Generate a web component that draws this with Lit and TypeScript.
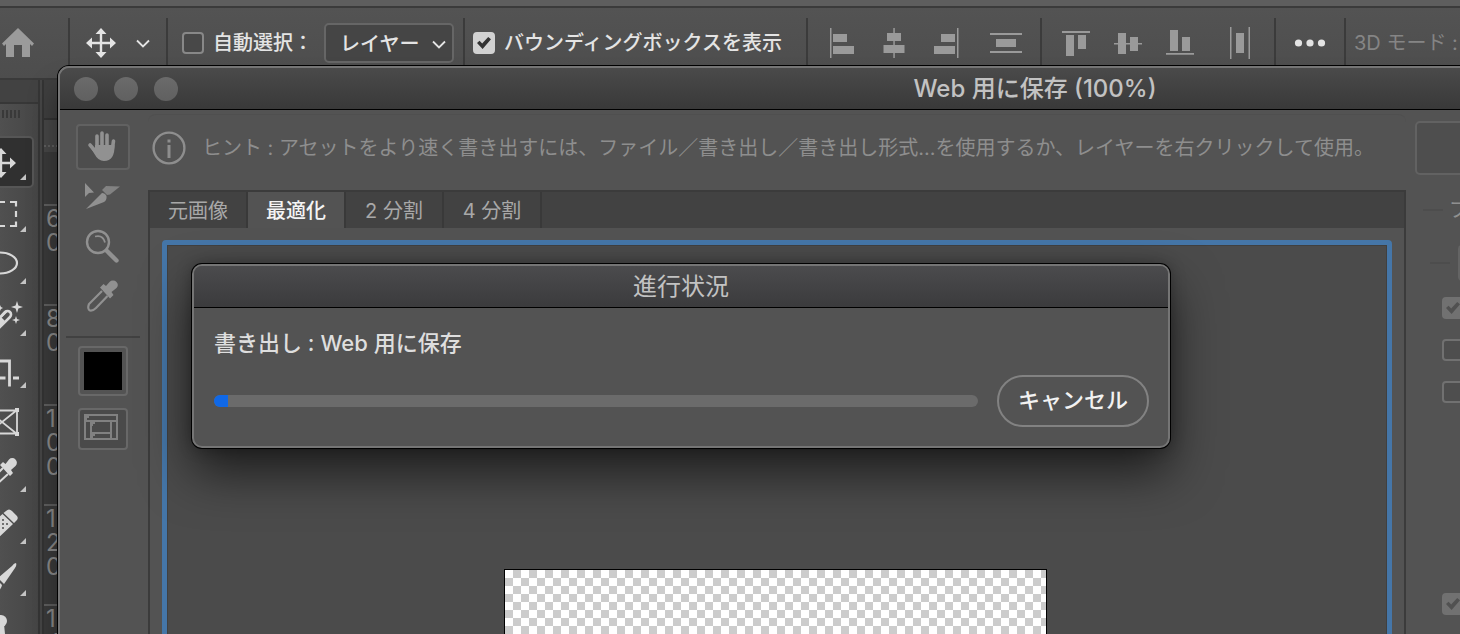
import { LitElement, html, svg, css } from "lit";
import { customElement } from "lit/decorators.js";

const moveGlyph = svg`
  <path d="M0 -15L5.5 -9H1.2V-1.2H9V-5.5L15 0L9 5.5V1.2H1.2V9H5.5L0 15L-5.5 9H-1.2V1.2H-9V5.5L-15 0L-9 -5.5V-1.2H-1.2V-9H-5.5Z"/>`;

const chevron = html`<svg class="chevron" viewBox="0 0 14 10" width="14" height="10" aria-hidden="true">
  <path d="M1 2.5L7 8.500L13 2.5" fill="none" stroke="currentColor" stroke-width="1.8"/></svg>`;

const alignGroups = [
  [
    { name: "左端揃え", d: "M-12 -15h1.5v30h-1.5zM-9 -9h14v8h-14zM-9 3h21v8h-21z" },
    { name: "水平方向中央揃え", d: "M-.7 -15h1.5v30h-1.5zM-7 -10h14v8h-14zM-10.5 2h21v8h-21z" },
    { name: "右端揃え", d: "M11 -15h1.5v30h-1.5zM-5 -9h14v8h-14zM-12 3h21v8h-21z" },
    { name: "垂直方向に分布", d: "M-16 -10h32v2h-32zM-10 -4h20v8h-20zM-16 8h32v2h-32z" },
  ],
  [
    { name: "上端揃え", d: "M-14 -12h28v2h-28zM-10 -8h8v21h-8zM2 -8h8v14h-8z" },
    { name: "垂直方向中央揃え", d: "M-14 0h28v1.6h-28zM-10 -10h8v21h-8zM2 -6h8v14h-8z" },
    { name: "下端揃え", d: "M-14 10h28v1.8h-28zM-10 -13h8v21h-8zM2 -6h8v14h-8z" },
    { name: "水平方向に分布", d: "M-10 -16h1.5v32h-1.5zM-4 -10h8v20h-8zM8.5 -16h1.5v32h-1.5z" },
  ],
];

const mainTools = [
  { name: "移動", active: true, more: true, art: svg`<g transform="translate(1 1)">${moveGlyph}</g>` },
  { name: "長方形選択", more: true, art: svg`<path d="M-1 -12H5M10 -12H16V-7.500M16 -3V3M16 7.500V12H10M5 12H-1M-6 12H-12M-6 -12H-12" fill="none" stroke="currentColor" stroke-width="2.2"/>` },
  { name: "なげなわ", more: true, art: svg`<ellipse cx="0" cy="-3" rx="17" ry="10.5" fill="none" stroke="currentColor" stroke-width="2.2"/>` },
  { name: "自動選択ツール", more: true, art: svg`
      <path d="M17 -17l1.4 4.600L23 -11l-4.600 1.400L17 -5l-1.400 -4.600L11 -11l4.600 -1.400zM16 -2l1 3L20 2l-3 1L16 6l-1 -3L12 2l3 -1zM0 -13l1 2L3 -10l-2 1L0 -7l-1 -2L-3 -10l2 -1z"/>
      <path d="M-9 9L5 -6a3.4 3.4 0 0 1 5 5L-4 13" fill="none" stroke="currentColor" stroke-width="2.6"/>
      <path d="M-10 9L0 -2l5 5L-5 14z"/><path d="M1 -1L7 -7" stroke="currentColor" stroke-width="2"/>` },
  { name: "切り抜き", more: true, art: svg`<path d="M-16 -9H9.5V16.500M-16 8H5.500M13 8H19" fill="none" stroke="currentColor" stroke-width="2.8"/>` },
  { name: "フレーム", more: false, art: svg`
      <path d="M-14 -11.500H17V11.500H-14zM-13 -12L17 12M-13 12L17 -12" fill="none" stroke="currentColor" stroke-width="1.8"/>
      <path d="M15 -14h4v4h-4zM15 10h4v4h-4z"/>` },
  { name: "スポイト", more: true, art: svg`
      <path d="M15.500 -14.500a4.500 4.500 0 0 0 -6.500 0L5.500 -10L3 -12L0 -9L10 2L13 -1L11 -4L15.500 -8a4.500 4.500 0 0 0 0 -6.500z"/>
      <path d="M3 -6L-12 9M8 0L-7 14" stroke="currentColor" stroke-width="2"/>` },
  { name: "修復ブラシ", more: true, art: svg`
      <path d="M6 -15Q9 -18 12 -15L16.500 -10.500Q19 -8 16.500 -5.500L14 -3L3.500 -13zM2.500 -12L13 -2L-4 14L-16 5z"/>
      <g fill="#4c4c4c"><circle cx="3" cy="-6" r="1"/><circle cx="7" cy="-2" r="1"/><circle cx="-1" cy="-2" r="1"/><circle cx="3" cy="2" r="1"/><circle cx="-1" cy="6" r="1"/><circle cx="3" cy="-2" r="1"/><circle cx="-1" cy="2" r="1"/></g>` },
  { name: "ブラシ", more: true, art: svg`<path d="M16 -15Q17 -13 15 -10L4 6L-2 0L12 -12Q14 -15 16 -15zM-3 2L2 7Q1 14 -8 14Q-6 4 -3 2z"/>` },
  { name: "コピースタンプ", more: true, art: svg`<circle cx="1" cy="-9" r="6"/><path d="M-2 -6h6l1 10h5q3 0 3 4v4h-26v-8h12z"/>` },
];

const rulerMarks = ["60", "80", "100", "120", "140"];

const slimDropper = svg`
  <path d="M14.500 -14a5 5 0 0 0 -7 0L4 -10L1.500 -12L-2 -8.500L8 2.500L11.500 -1L9.500 -4L14.500 -8a4.500 4.500 0 0 0 0 -6z"/>
  <path d="M0 -5L-13 8Q-15 13 -12 14.500Q-9 15 -6 12L5.500 0" fill="none" stroke="currentColor" stroke-width="2.2"/>`;

const saveTools = [
  { name: "手のひら", cls: "save-tool framed", art: svg`
      <g fill="none" stroke="currentColor" stroke-width="3.600" stroke-linecap="round">
        <path d="M-6 1V-11M-1 1V-14M4 1V-12M9.500 1L10.500 -6M-13 -2L-6 6"/></g>
      <path d="M-8 -2H11.500Q12 14 1 14Q-5 14 -8.500 7L-13 0L-8 3z"/>` },
  { name: "スライス選択", cls: "save-tool", art: svg`
      <path d="M-18 -12L-9 -2.500L-14 -2L-18 2z"/><path d="M-17 14L-1 -2Q2 -2 3.500 1Q4 5 1 7z"/>
      <path d="M-1 -5L3 -9L17 -8.500L7 -.500L4 0z" opacity=".75"/>` },
  { name: "ズーム", cls: "save-tool", art: svg`
      <circle cx="-5" cy="-3" r="11" fill="none" stroke="currentColor" stroke-width="2.400"/>
      <path d="M-8 -8.500Q0 -10.500 2 -2.500" fill="none" stroke="currentColor" stroke-width="1.800"/>
      <path d="M4 6L13.500 15.500" stroke="currentColor" stroke-width="4.400" stroke-linecap="round"/>` },
  { name: "スポイトツール", cls: "save-tool", art: svg`<g transform="translate(-1 1)">${slimDropper}</g>` },
];

@customElement("app-root")
export class AppRoot extends LitElement {
  static styles = css`
    :host {
      display: block;
      position: relative;
      height: 100vh;
      overflow: hidden;
      background: #464646;
      color: #e4e4e4;
      font: 20px/28px Inter, "Noto Sans CJK JP", sans-serif;
    }
    * { box-sizing: border-box; }
    button, input, select {
      appearance: none;
      margin: 0;
      padding: 0;
      border: 0;
      border-radius: 0;
      background: none;
      color: inherit;
      font: inherit;
    }
    svg { display: block; fill: currentColor; flex: none; }
    .workspace { height: 100%; display: flex; flex-direction: column; }

    .options {
      flex: none;
      display: flex;
      height: 80px;
      border-top: 6px solid #5e5e5e;
      border-bottom: 2px solid #3a3a3a;
      background: linear-gradient(#3b3b3b 0 2px, #535353 2px, #4d4d4d);
      white-space: nowrap;
    }
    .group {
      flex: none;
      display: flex;
      align-items: center;
      margin-top: 2px;
      background: linear-gradient(#3b3b3b, #3b3b3b) 0 10px / 2px 100% no-repeat;
      padding-left: 2px;
    }
    .group.home { width: 68px; background: none; color: #9b9b9b; }
    .move-group { width: 98px; padding-left: 18px; gap: 20px; }
    .auto-group { width: 297px; padding-left: 16px; gap: 11px; font-weight: 500; }
    .bounds-group { width: 343px; padding-left: 10px; font-weight: 500; }
    .align-group { padding: 0 8px 0 10px; color: #9a9a9a; }
    .more-group { width: 70px; }
    .mode-group { padding-left: 10px; color: #858585; }
    .icon-button { width: 52px; display: grid; place-items: center; }
    .icon-button:last-child { margin-left: 8px; }
    .more { width: 68px; display: grid; place-items: center; }
    .check { display: flex; align-items: center; gap: 9px; }
    .tick {
      flex: none;
      display: grid;
      place-items: center;
      width: 22px;
      height: 22px;
      border: 2px solid #888;
      border-radius: 4px;
      background: #484848;
    }
    .tick:checked { border-color: #d2d2d2; background: #d2d2d2; }
    .tick:checked::before {
      content: "";
      width: 14px;
      height: 12px;
      background: #333;
      clip-path: polygon(0 50%, 18% 32%, 37% 55%, 80% 0, 100% 18%, 40% 100%);
    }
    .drop { display: grid; align-items: center; width: 130px; }
    .drop select {
      grid-area: 1 / 1;
      height: 40px;
      padding: 2px 32px 0 14px;
      border: 2px solid #666;
      border-radius: 5px;
      background: #454545;
    }
    .drop .chevron { grid-area: 1 / 1; justify-self: end; margin: 2px 8px 0 0; pointer-events: none; }

    .lower { flex: 1; min-height: 0; display: flex; }
    .toolbox {
      width: 40px;
      flex: none;
      border-right: 2px solid #363636;
      background: linear-gradient(90deg, #505050, #464646);
      overflow: hidden;
    }
    .dock-head { height: 24px; border-bottom: 2px solid #373737; background: #424242; }
    .grip {
      width: 20px;
      height: 8px;
      margin: 6px 0 18px 2px;
      background: repeating-linear-gradient(90deg, #393939 0 2px, transparent 2px 4px);
    }
    .tool {
      position: relative;
      display: flex;
      justify-content: center;
      align-items: center;
      width: 68px;
      height: 52px;
      margin-left: -34px;
      border-radius: 5px;
      color: #d8d8d8;
    }
    .tool.active { background: #303030; border: 2px solid #565656; }
    .tool.more-tools::after {
      content: "";
      position: absolute;
      right: 8px;
      bottom: 8px;
      border: 3px solid;
      border-color: transparent #c4c4c4 #c4c4c4 transparent;
    }
    .tool.active::after { right: 6px; bottom: 6px; }
    .ruler {
      width: 40px;
      flex: none;
      margin-left: 2px;
      border-left: 2px solid #343434;
      padding-top: 40px;
      background: linear-gradient(#3f3f3f 0 38px, #333 38px 40px, #474747 40px 72px, #3b3b3b 72px);
      overflow: hidden;
    }
    .ruler-origin { height: 27px; border-bottom: 2px dotted #606060; }
    .marks { padding-top: 57px; }
    .mark {
      height: 100px;
      width: 20px;
      padding: 1px 0 0 2px;
      border-top: 2px solid #606060;
      color: #8c8c8c;
      font-size: 24px;
      line-height: 24px;
    }
    .mark span { display: block; }

    .save-window {
      position: absolute;
      top: 66px;
      left: 58px;
      right: -552px;
      bottom: -200px;
      display: flex;
      flex-direction: column;
      border: 2px solid #757575;
      border-radius: 11px;
      overflow: hidden;
      background: #535353;
    }
    .window-shadow {
      position: absolute;
      top: 66px;
      left: 58px;
      right: -552px;
      bottom: -200px;
      border-radius: 11px;
      box-shadow: 0 0 0 1px #000, 0 24px 30px rgba(0, 0, 0, .42);
    }
    .titlebar {
      flex: none;
      display: grid;
      grid-template-columns: 1fr auto 1fr;
      align-items: center;
      height: 42px;
      padding: 0 14px;
      border-bottom: 1px solid #000;
      background: linear-gradient(#4a4a4a, #393939);
    }
    .lights { display: flex; gap: 16px; }
    .light { width: 24px; height: 24px; border-radius: 50%; background: linear-gradient(#6b6b6b, #606060); }
    h1, h2 { margin: 0; font-size: 24px; line-height: 32px; font-weight: 400; color: #c2c2c2; }
    h1 { font-weight: 500; }
    .body { flex: 1; min-height: 0; display: grid; grid-template-columns: 88px 1fr 604px; }
    .save-tools {
      display: flex;
      flex-direction: column;
      align-items: center;
      padding: 14px 2px 0 0;
      color: #919191;
    }
    .save-tool { display: grid; place-items: center; width: 54px; height: 50px; }
    .framed { height: 46px; border: 2px solid #616161; border-radius: 4px; background: #4d4d4d; }
    .rule { width: 74px; margin: 16px 0 8px; border: 0; border-top: 2px solid #414141; }
    .swatch {
      width: 50px;
      height: 50px;
      border: 2px solid #686868;
      border-radius: 4px;
      padding: 4px;
      background: #000 content-box;
    }
    .slices {
      display: grid;
      place-items: center;
      width: 50px;
      height: 42px;
      margin-top: 12px;
      padding: 0 4px 4px 0;
      border: 2px solid #686868;
      border-radius: 4px;
      background: #4a4a4a;
    }
    .main { display: flex; flex-direction: column; min-width: 0; }
    .hint {
      flex: none;
      display: flex;
      align-items: center;
      gap: 16px;
      height: 66px;
      margin: 4px 0 10px;
      padding-left: 4px;
      border-top: 1px solid #4f4f4f;
      border-radius: 8px;
      color: #8e8e8e;
      white-space: nowrap;
    }
    .hint p { margin: 0; }
    .preview { flex: 1; display: flex; flex-direction: column; border: 2px solid #3b3b3b; }
    .tabs { flex: none; display: flex; height: 36px; background: #424242; }
    .tab { width: 98px; padding-top: 2px; border-right: 2px solid #393939; color: #a8a8a8; }
    .tab.on { background: #535353; color: #f4f4f4; font-weight: 500; }
    .canvas {
      flex: 1;
      margin: 12px;
      padding: 324px 4px 0 0;
      border: 5px solid #4576a8;
      border-radius: 4px;
      background: #4b4b4b;
      box-shadow: inset 0 0 0 1px #404040;
    }
    .image {
      width: 543px;
      height: 400px;
      margin: 0 auto;
      border: 1px solid #000;
      background: repeating-conic-gradient(#ccc 0 25%, #fff 0 50%) 0 0 / 16px 16px;
    }
    .settings { padding: 11px 0 0 9px; color: #909090; }
    .preview-button { display: block; width: 300px; height: 54px; border: 2px solid #626262; border-radius: 5px; background: #4e4e4e; }
    .preset { display: flex; align-items: center; gap: 6px; height: 70px; padding-left: 8px; }
    .dash { width: 20px; border-top: 2px solid #4d4d4d; }
    .format { display: flex; align-items: center; gap: 8px; margin: 0 0 16px 15px; }
    .format select { width: 240px; height: 36px; border: 2px solid #646464; border-radius: 4px; padding-left: 12px; background: #4d4d4d; }
    .settings .check { padding-left: 27px; height: 22px; margin-bottom: 20px; }
    .settings .tick { border-color: #717171; background: #4e4e4e; }
    .settings .tick:checked { background: #717171; }
    .settings .tick:checked::before { background: #515151; }
    .settings .check.far { margin-top: 190px; }

    .progress {
      position: absolute;
      top: 264px;
      left: 192px;
      right: 290px;
      border: 2px solid #757575;
      border-radius: 10px;
      background: #535353;
      box-shadow: 0 0 0 1px #000, 0 24px 50px rgba(0, 0, 0, .62), 0 0 16px rgba(0, 0, 0, .3);
    }
    .progress h2 {
      height: 42px;
      border-radius: 8px 8px 0 0;
      border-bottom: 1px solid #000;
      background: linear-gradient(#4b4b4d, #3b3b3d);
      line-height: 42px;
      text-align: center;
    }
    .progress-body { padding: 19px 19px 19px 20px; font-size: 22px; line-height: 32px; font-weight: 500; }
    .progress-body label { display: block; margin-bottom: 16px; color: #dedede; }
    .progress-row { display: flex; align-items: center; gap: 19px; }
    progress {
      appearance: none;
      flex: 1;
      min-width: 0;
      height: 12px;
      border: 0;
      border-radius: 6px;
      overflow: hidden;
      background: #6b6b6b;
    }
    progress::-webkit-progress-bar { background: #6b6b6b; }
    progress::-webkit-progress-value { background: #1068e6; }
    .cancel { width: 152px; height: 52px; padding-bottom: 2px; border: 2px solid #828282; border-radius: 26px; color: #f2f2f2; }
  `;

  private optionsBar() {
    return html`<header class="options">
      <div class="group home">
        <button aria-label="ホーム">
          <svg viewBox="0 0 32 30" width="32" height="30"><path d="M16 0L32 15.500L30 18L28 16V29H20V17H12V29H4V16L2 18L0 15.500z"/></svg>
        </button>
      </div>
      <div class="group move-group">
        <svg viewBox="-15 -15 30 30" width="30" height="30">${moveGlyph}</svg>
        ${chevron}
      </div>
      <div class="group auto-group">
        <label class="check"><input class="tick" type="checkbox" />自動選択：</label>
        <span class="drop"><select aria-label="自動選択の対象"><option>レイヤー</option></select>${chevron}</span>
      </div>
      <div class="group bounds-group">
        <label class="check"><input class="tick" type="checkbox" checked />バウンディングボックスを表示</label>
      </div>
      ${alignGroups.map((group) => html`<div class="group align-group">
        ${group.map((item) => html`<button class="icon-button" aria-label=${item.name}>
          <svg viewBox="-20 -20 40 40" width="40" height="40"><path d=${item.d}/></svg></button>`)}
      </div>`)}
      <div class="group more-group">
        <button class="more" aria-label="その他">
          <svg viewBox="-20 -20 40 40" width="40" height="40"><circle cx="-11.500" r="3.600"/><circle r="3.600"/><circle cx="11.500" r="3.600"/></svg>
        </button>
      </div>
      <div class="group mode-group">3D モード :</div>
    </header>`;
  }

  private toolbox() {
    return html`<nav class="toolbox">
      <div class="dock-head"></div>
      <div class="grip"></div>
      ${mainTools.map((t) => html`<button aria-label=${t.name}
        class="tool ${t.active ? "active" : ""} ${t.more ? "more-tools" : ""}">
        <svg viewBox="-26 -26 52 52" width="52" height="52">${t.art}</svg></button>`)}
    </nav>
    <div class="ruler">
      <div class="ruler-origin"></div>
      <div class="marks">
        ${rulerMarks.map((m) => html`<div class="mark">${[...m].map((c) => html`<span>${c}</span>`)}</div>`)}
      </div>
    </div>`;
  }

  private saveWindow() {
    return html`<div class="window-shadow"></div>
    <section class="save-window">
      <div class="titlebar">
        <div class="lights"><span class="light"></span><span class="light"></span><span class="light"></span></div>
        <h1>Web 用に保存 (100%)</h1>
      </div>
      <div class="body">
        <div class="save-tools">
          ${saveTools.map((t) => html`<button class=${t.cls} aria-label=${t.name}>
            <svg viewBox="-20 -20 40 40" width="40" height="40">${t.art}</svg></button>`)}
          <hr class="rule" />
          <button class="swatch" aria-label="スポイトカラー"></button>
          <button class="slices" aria-label="スライスの表示切り替え">
            <svg viewBox="0 0 34 26" width="34" height="26"><path d="M1 1H33V25H1zM1 7H33M7 8V25M27 8V25M8 19H26" fill="none" stroke="#818181" stroke-width="2"/><path d="M2 2h3v2h-2v2h-1zM8 8h3v2h-2v2h-1zM8 20h3v2h-2v2h-1z" fill="#818181"/></svg>
          </button>
        </div>
        <div class="main">
          <div class="hint">
            <svg viewBox="-17 -17 34 34" width="34" height="34"><circle r="15.400" fill="none" stroke="currentColor" stroke-width="2.400"/><path d="M-1.500 -3h3v13h-3zM-1.500 -8.500h3v3h-3z"/></svg>
            <p>ヒント : アセットをより速く書き出すには、ファイル／書き出し／書き出し形式...を使用するか、レイヤーを右クリックして使用。</p>
          </div>
          <div class="preview">
            <div class="tabs" role="tablist">
              ${["元画像", "最適化", "2 分割", "4 分割"].map((name, i) => html`<button role="tab"
                aria-selected=${i === 1} class="tab ${i === 1 ? "on" : ""}">${name}</button>`)}
            </div>
            <div class="canvas"><div class="image"></div></div>
          </div>
        </div>
        <aside class="settings">
          <button class="preview-button" aria-label="プレビュー"></button>
          <div class="preset"><span class="dash"></span>プリセット :</div>
          <div class="format"><span class="dash"></span><select aria-label="ファイル形式"></select></div>
          <div class="check"><input class="tick" type="checkbox" checked aria-label="透明部分" /></div>
          <div class="check"><input class="tick" type="checkbox" aria-label="インターレース" /></div>
          <div class="check"><input class="tick" type="checkbox" aria-label="プロファイルの埋め込み" /></div>
          <div class="check far"><input class="tick" type="checkbox" checked aria-label="sRGB に変換" /></div>
        </aside>
      </div>
    </section>`;
  }

  render() {
    return html`
      <div class="workspace">
        ${this.optionsBar()}
        <div class="lower">${this.toolbox()}</div>
      </div>
      ${this.saveWindow()}
      <section class="progress" role="dialog" aria-labelledby="progress-title">
        <h2 id="progress-title">進行状況</h2>
        <div class="progress-body">
          <label for="export">書き出し : Web 用に保存</label>
          <div class="progress-row">
            <progress id="export" max="100" value="1.8"></progress>
            <button class="cancel">キャンセル</button>
          </div>
        </div>
      </section>`;
  }
}
